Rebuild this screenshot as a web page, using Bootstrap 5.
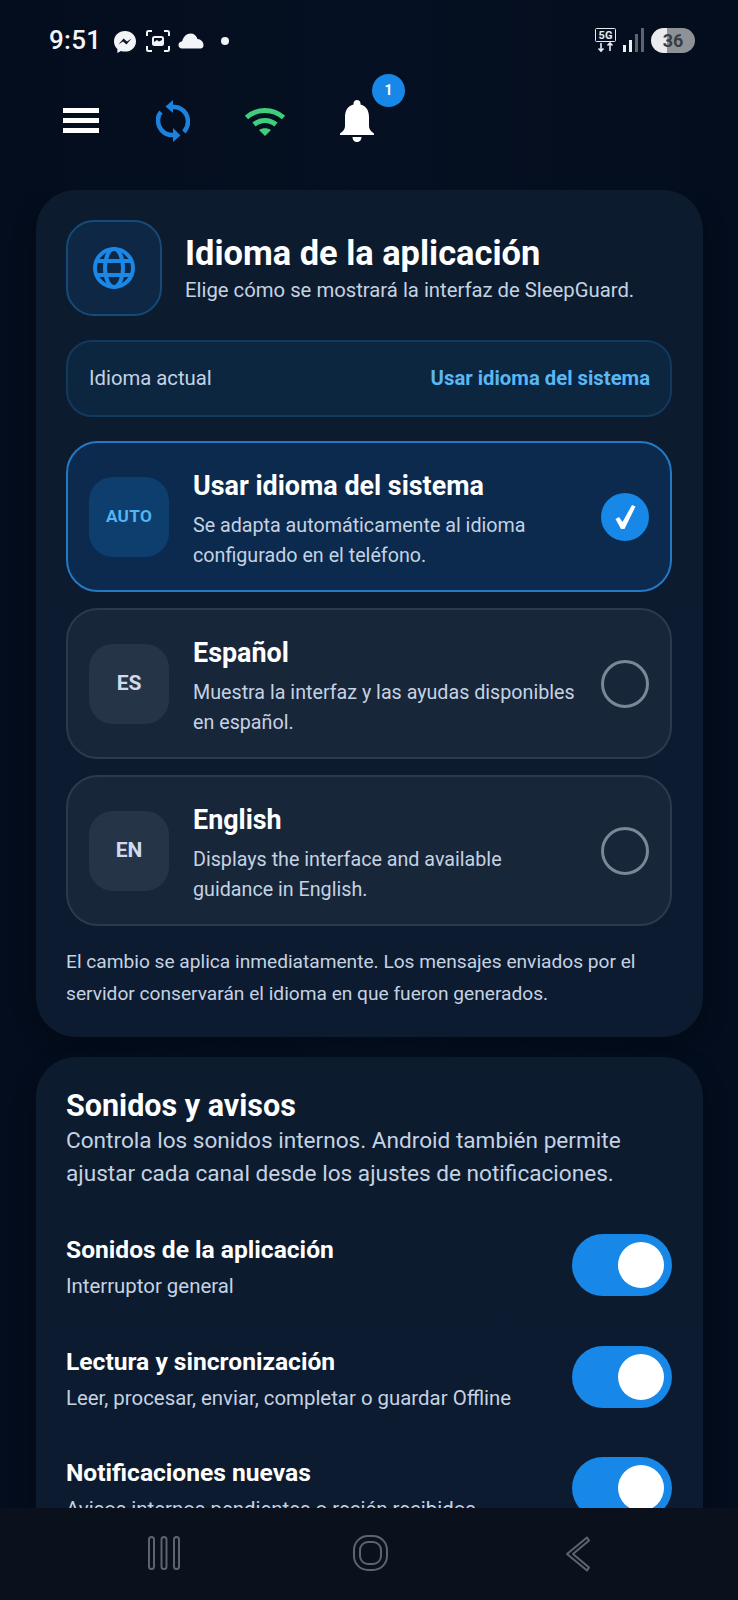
<!DOCTYPE html>
<html lang="es"><head><meta charset="utf-8"><title>SleepGuard</title>
<link href="https://cdn.jsdelivr.net/npm/bootstrap@5.3.0/dist/css/bootstrap.min.css" rel="stylesheet">
<style>
html,body{height:1600px;overflow:hidden}
body{background:linear-gradient(90deg,#040d1d 0,#051022 50%,#040d1d 100%);font-family:Roboto,sans-serif;color:#fff;width:738px}
.sbar{height:80px;padding:28px 43px 0 49px;color:#f2f4f7}
.sbar .tm{font-size:26px;font-weight:500;line-height:25px;width:64px;letter-spacing:.3px}
.tbar{height:110px;padding-left:35px}
.tbtn{width:92px;height:68px}
.bdg{top:-6px;left:61px;width:33px;height:33px;background:#1787e8;font-size:14px;font-weight:700}
.appview{height:1318px;overflow:hidden;padding:0 35px 0 36px}
.pan{background:linear-gradient(180deg,#0d1b2e,#0c1b30);border-radius:40px;padding:30px 31px 30px 30px;margin-bottom:20px;box-shadow:0 8px 24px rgba(0,0,0,.3)}
.pan.fst{padding-bottom:27px}
.globebox{width:96px;height:96px;border-radius:28px;background:#0d2744;border:2px solid #164a78;margin-right:23px}
.ttl{font-size:34.4px;font-weight:700;line-height:40px;margin:0}
.sub{font-size:20.3px;color:#c5d2e2;line-height:28px;margin:3px 0 0}
.cur{height:77px;border:2px solid #123a5e;border-radius:26px;background:#0c2640;padding:0 20px 0 21px;margin:24px 0;font-size:20.3px;color:#c5d2e2}
.cur b{color:#5ab7f3;font-weight:700}
.opt{height:151px;border-radius:32px;border:2px solid #2a3b4e;background:#18263a;padding:0 21px;margin-bottom:16px}
.opt.sel{background:#0b2a4e;border-color:#2379c4}
.code{width:80px;height:80px;border-radius:24px;background:#263448;color:#cfdbea;font-weight:700;font-size:21px;margin-right:24px;flex:none}
.sel .code{background:#0e3e6e;color:#53b4f2;font-size:17.2px;letter-spacing:.3px}
.optbody{padding-top:7px}
.optt{font-size:26.9px;font-weight:700;line-height:32px;margin-bottom:9px}
.optd{font-size:19.7px;line-height:30px;color:#c5d2e2}
.rad{width:48px;height:48px;border-radius:50%;border:3px solid #7a8797;flex:none}
.rad.on{background:#1787e8;border:0}
.note{font-size:19.15px;line-height:32px;color:#c5d2e2;margin:0;padding-top:4px}
.h2x{font-size:30.5px;font-weight:700;line-height:36px;margin:1px 0 0}
.dsc2{font-size:22.6px;line-height:32.5px;color:#c5d2e2;margin:1px 0 44px}
.rw{height:111.5px;align-items:flex-start}
.rwt{font-size:24.6px;font-weight:700;line-height:32px;margin:0 0 6px}
.rwd{font-size:20.4px;line-height:28px;color:#c5d2e2;margin:0}
.tog{width:100px;height:62px;border-radius:31px;background:#1787e8;flex:none;padding:8px}
.kn{width:46px;height:46px;border-radius:50%;background:#fff;margin-left:auto}
.nbar{position:fixed;left:0;right:0;top:1508px;height:92px;background:#0a101c}
.nbar svg{position:absolute}
</style></head><body>
<div class="sbar d-flex align-items-start">
<span class="tm">9:51</span>
<svg width="24" height="24" viewBox="0 0 24 24" style="margin-top:2px"><path fill="#f2f4f7" d="M12 1C5.800 1 1 5.500 1 11.400c0 3 1.300 5.700 3.400 7.500V23l3.600-2c1.300.4 2.600.6 4 .6 6.200 0 11-4.500 11-10.200S18.200 1 12 1z"/><path fill="#0a1526" d="M5.500 14.500 10.500 8.500l3.500 3 4.500-3-5 6-3.500-3z"/></svg>
<svg width="26" height="24" viewBox="0 0 26 24" style="margin-left:8px;margin-top:1px" fill="none" stroke="#f2f4f7" stroke-width="2"><path d="M2 7V3.500Q2 2 3.500 2H7M19 2h3.500Q24 2 24 3.500V7M24 17v3.500Q24 22 22.500 22H19M7 22H3.500Q2 22 2 20.500V17"/><rect x="8" y="8" width="10" height="8" rx="1.500"/><path d="M9 13l3-2 2 1.500 3-1.500v4H9z" fill="#f2f4f7" stroke="none"/></svg>
<svg width="26" height="16" viewBox="0 0 26 16" style="margin-left:7px;margin-top:5px"><path fill="#f2f4f7" d="M4 15.500C1.800 15.500.5 14 .5 12c0-2 1.500-3.500 3.700-3.700C5.500 3.500 8.700.5 12.500.5c3.500 0 6 2 7 5.500 3.500.2 6 3 6 6 0 2-1 3.500-3 3.500z"/></svg>
<svg width="10" height="10" viewBox="0 0 10 10" style="margin-left:16px;margin-top:8px"><circle cx="5" cy="5" r="4" fill="#f2f4f7"/></svg>
<svg class="ms-auto" width="24" height="25" viewBox="0 0 24 25" fill="none" stroke="#e8ebef"><rect x="1.500" y=".5" width="20" height="13" rx="1"/><text x="11.500" y="11" font-family="Roboto,sans-serif" font-size="11" font-weight="700" text-anchor="middle" fill="#e8ebef" stroke="none">5G</text><path stroke-width="1.600" d="M7 15v8m-2.500-2.500L7 23l2.500-2.500M16 23v-8m-2.500 2.500L16 15l2.500 2.500"/></svg>
<svg width="24" height="24" viewBox="0 0 24 24" style="margin-left:3px"><rect x="2" y="17" width="3" height="7" fill="#eceff3"/><rect x="8" y="12" width="3" height="12" fill="#eceff3"/><rect x="14" y="6" width="3" height="18" fill="#5a6472"/><rect x="20" y="0" width="3" height="24" fill="#5a6472"/></svg>
<div class="text-center overflow-hidden rounded-pill" style="width:44px;height:25px;margin-left:6px;background:linear-gradient(90deg,#e9ebee 0,#e9ebee 36%,#8e9196 36%);color:#3a3d42;font-size:18px;font-weight:700;line-height:25px">36</div>
</div>
<div class="tbar d-flex align-items-start">
<div class="tbtn d-flex justify-content-center" style="padding-top:28px"><svg width="36" height="25" viewBox="0 0 36 25"><path fill="#fff" d="M0 0h36v5H0zM0 10h36v5H0zM0 20h36v5H0z"/></svg></div>
<div class="tbtn d-flex justify-content-center" style="padding-top:20px"><svg width="34" height="42" viewBox="0 0 34 42" fill="none" stroke="#1b82de" stroke-width="4.500"><path d="M16 7c9-1 16 6 16 15 0 4-1.500 7-4 10"/><path fill="#1b82de" stroke="none" d="M9.500 6.500 17 0v13z"/><path d="M18 35C9 36 2 29 2 20c0-3 1-6 3-8"/><path fill="#1b82de" stroke="none" d="M24.500 35.500 17 42V28z"/></svg></div>
<div class="tbtn d-flex justify-content-center" style="padding-top:26px"><svg width="42" height="30" viewBox="0 0 42 30" fill="none" stroke="#3fcf7c" stroke-width="5"><path d="M2.500 11.500C13 2 29 2 39.500 11.500"/><path d="M10 18.500C16.500 13 25.500 13 32 18.500"/><path fill="#3fcf7c" stroke="none" d="M15 24c3.500-2.500 8.500-2.500 12 0l-6 6z"/></svg></div>
<div class="tbtn d-flex justify-content-center position-relative" style="padding-top:20px"><svg width="36" height="42" viewBox="0 0 36 42"><path fill="#fff" d="M18 0c2 0 3.500 1.500 3.500 3.500v1C27.500 6 30 11 30 17v9c0 3 1.500 5 5 7.500v1.500H1v-1.500C4.500 31 6 29 6 26v-9C6 11 8.500 6 14.500 4.500v-1C14.500 1.500 16 0 18 0zM13.500 37h9c0 3-2 5-4.500 5s-4.500-2-4.500-5z"/></svg>
<span class="bdg position-absolute rounded-circle d-flex align-items-center justify-content-center">1</span></div>
</div>
<main class="appview">
<section class="pan fst">
<div class="d-flex align-items-center">
<div class="globebox d-flex align-items-center justify-content-center flex-shrink-0"><svg width="42" height="42" viewBox="0 0 42 42" fill="none" stroke="#1b87e6" stroke-width="4"><circle cx="21" cy="21" r="19"/><ellipse cx="21" cy="21" rx="9" ry="19"/><path d="M4 14h34M4 28h34"/></svg></div>
<div><h1 class="ttl">Idioma de la aplicación</h1><p class="sub">Elige cómo se mostrará la interfaz de SleepGuard.</p></div>
</div>
<div class="cur d-flex align-items-center justify-content-between"><span>Idioma actual</span><b>Usar idioma del sistema</b></div>
<div class="opt sel d-flex align-items-center"><div class="code d-flex align-items-center justify-content-center">AUTO</div><div class="optbody flex-grow-1"><div class="optt">Usar idioma del sistema</div><div class="optd">Se adapta automáticamente al idioma<br>configurado en el teléfono.</div></div><div class="rad on d-flex align-items-center justify-content-center"><svg width="21" height="24" viewBox="0 0 21 24"><path fill="#fff" d="M17 0l3.500 1.500L9.500 24H6L.5 14l3.500-2 3.500 5z"/></svg></div></div>
<div class="opt d-flex align-items-center"><div class="code d-flex align-items-center justify-content-center">ES</div><div class="optbody flex-grow-1"><div class="optt">Español</div><div class="optd">Muestra la interfaz y las ayudas disponibles<br>en español.</div></div><div class="rad"></div></div>
<div class="opt d-flex align-items-center"><div class="code d-flex align-items-center justify-content-center">EN</div><div class="optbody flex-grow-1"><div class="optt">English</div><div class="optd">Displays the interface and available<br>guidance in English.</div></div><div class="rad"></div></div>
<p class="note">El cambio se aplica inmediatamente. Los mensajes enviados por el<br>servidor conservarán el idioma en que fueron generados.</p>
</section>
<section class="pan">
<h2 class="h2x">Sonidos y avisos</h2>
<p class="dsc2">Controla los sonidos internos. Android también permite<br>ajustar cada canal desde los ajustes de notificaciones.</p>
<div class="rw d-flex justify-content-between"><div><p class="rwt">Sonidos de la aplicación</p><p class="rwd">Interruptor general</p></div><div class="tog"><div class="kn"></div></div></div>
<div class="rw d-flex justify-content-between"><div><p class="rwt">Lectura y sincronización</p><p class="rwd">Leer, procesar, enviar, completar o guardar Offline</p></div><div class="tog"><div class="kn"></div></div></div>
<div class="rw d-flex justify-content-between"><div><p class="rwt">Notificaciones nuevas</p><p class="rwd">Avisos internos pendientes o recién recibidos</p></div><div class="tog"><div class="kn"></div></div></div>
</section>
</main>
<nav class="nbar">
<svg style="left:148px;top:28px" width="32" height="34" viewBox="0 0 32 34" fill="none" stroke="#5d6470" stroke-width="2"><rect x="1" y="1" width="5" height="32" rx="2.500"/><rect x="13.500" y="1" width="5" height="32" rx="2.500"/><rect x="26" y="1" width="5" height="32" rx="2.500"/></svg>
<svg style="left:353px;top:27px" width="35" height="36" viewBox="0 0 35 36" fill="none" stroke="#5d6470" stroke-width="2"><rect x="1" y="1" width="33" height="34" rx="14"/><rect x="7" y="7" width="21" height="22" rx="8"/></svg>
<svg style="left:565px;top:28px" width="26" height="36" viewBox="0 0 26 36" fill="none" stroke="#5d6470" stroke-width="2"><path d="M22 1.500 2 18l20 16.500 2-3L8 18 24 4.500z" stroke-linejoin="round"/></svg>
</nav>
</body></html>
